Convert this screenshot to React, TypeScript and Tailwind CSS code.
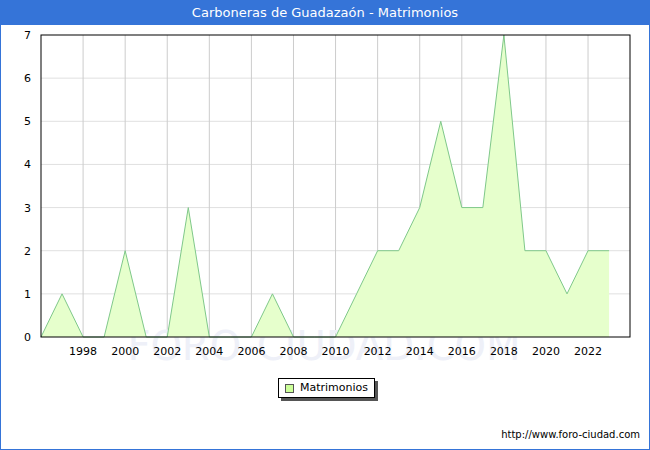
export default function App() {
  const data = [0,1,0,0,2,0,0,3,0,0,0,1,0,0,0,1,2,2,3,5,3,3,7,2,2,1,2,2];
  const L = 41, R = 630, T = 35, B = 337;
  const dx = 21.04, dy = (B - T) / 7;
  const px = (i: number) => L + i * dx;
  const py = (v: number) => B - v * dy;
  const line = data.map((v, i) => `${px(i)},${py(v)}`).join(" ");
  const area = `M${px(0)},${B} L` + line.split(" ").join(" L") + ` L${px(data.length - 1)},${B} Z`;
  const years = [];
  for (let y = 1998; y <= 2022; y += 2) years.push(y);
  return (
    <div className="w-[650px] h-[450px] bg-white border border-[#3574d8] flex flex-col" style={{ fontFamily: '"DejaVu Sans", Verdana, sans-serif' }}>
      <div className="h-[24px] bg-[#3574d8] text-white text-[13px] flex items-center justify-center shrink-0">Carboneras de Guadazaón - Matrimonios</div>
      <div className="relative flex-1">
        <svg width="648" height="424" className="absolute left-0 top-[-25px]" viewBox="0 0 648 424">
          <g transform="translate(-1,0)">
            {[1,2,3,4,5,6].map(v => <line key={v} x1={L} x2={R} y1={py(v)} y2={py(v)} stroke="#e0e0e0" />)}
            {years.map((y) => <line key={y} x1={px(y - 1996)} x2={px(y - 1996)} y1={T} y2={B} stroke="#cccccc" />)}
            <text x="324" y="360" textAnchor="middle" fontSize="40" fill="#eef0f8" fontFamily="DejaVu Sans">FORO-CIUDAD.COM</text>
            <path d={area} fill="#e6ffcc" />
            <polyline points={line} fill="none" stroke="#7fc88a" strokeWidth="1" />
            <rect x={L} y={T} width={R - L} height={B - T} fill="none" stroke="#000" />
            {[0,1,2,3,4,5,6,7].map(v => <text key={v} x="31" y={py(v) + 4} textAnchor="end" fontSize="11" fill="#000">{v}</text>)}
            {years.map((y) => <text key={y} x={px(y - 1996)} y="355" textAnchor="middle" fontSize="11" fill="#000">{y}</text>)}
          </g>
        </svg>
        <div className="absolute left-[277px] top-[353px] w-[97px] h-[20px] bg-white border border-black flex items-center gap-[6px] pl-[6px] text-[11px] shadow-[3px_3px_0_#555]">
          <span className="w-[9px] h-[9px] bg-[#ccff99] border border-[#555]"></span>Matrimonios
        </div>
        <div className="absolute right-[9px] top-[402px] text-[10px]">http://www.foro-ciudad.com</div>
      </div>
    </div>
  );
}
